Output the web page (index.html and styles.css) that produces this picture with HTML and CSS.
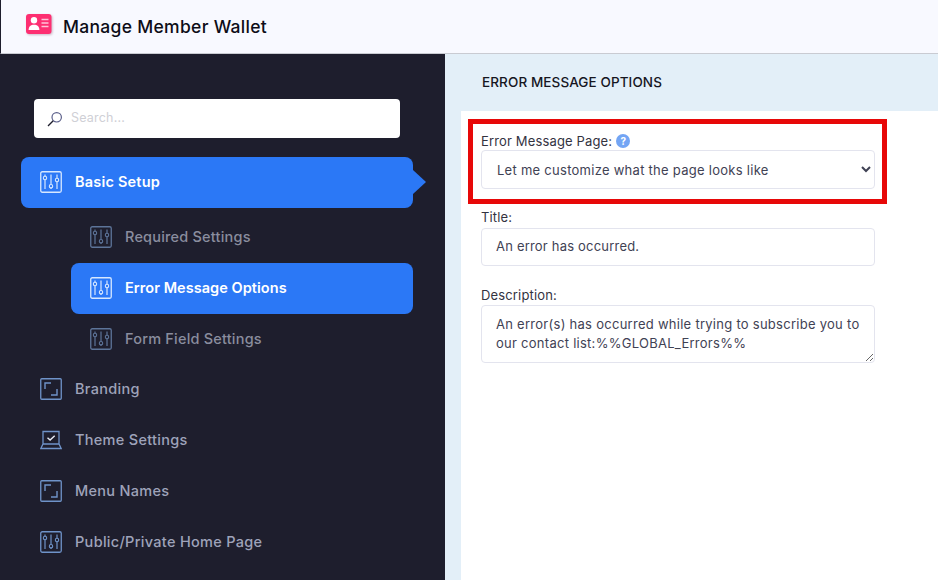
FILE: index.html
```html
<!DOCTYPE html>
<html lang="en">
<head>
<meta charset="utf-8">
<title>Manage Member Wallet</title>
<link rel="stylesheet" href="styles.css">
</head>
<body>
<svg class="defs" width="0" height="0" aria-hidden="true">
  <symbol id="sliders" viewBox="0 0 22 22">
    <rect x="0.75" y="0.75" width="20.5" height="20.5" rx="1.5" fill="none" stroke="currentColor" stroke-width="1.3"/>
    <path d="M5 9v9M11 3.5v10M17 3.5v3.5M17 11v7M5 3.5V5M11 17v1" fill="none" stroke="currentColor" stroke-width="1.2"/>
    <circle cx="5" cy="7" r="1.7" fill="none" stroke="currentColor" stroke-width="1.1"/>
    <circle cx="11" cy="15.2" r="1.7" fill="none" stroke="currentColor" stroke-width="1.1"/>
    <circle cx="17" cy="9" r="1.7" fill="none" stroke="currentColor" stroke-width="1.1"/>
  </symbol>
  <symbol id="frame" viewBox="0 0 22 22">
    <rect x="0.75" y="0.75" width="20.5" height="20.5" rx="1" fill="none" stroke="currentColor" stroke-width="1.3"/>
    <path d="M5 11V5h6M17 11v6h-6" fill="none" stroke="currentColor" stroke-width="1.4"/>
  </symbol>
  <symbol id="laptop" viewBox="0 0 22 22">
    <path d="M3 15V2.500h16V15M0.800 19.500h20.400L19 15H3z" fill="none" stroke="currentColor" stroke-width="1.300"/>
    <path d="M7.500 8.700l2.600 2.400 4.600-4.400" fill="none" stroke="#e8ecf5" stroke-width="1.400"/>
  </symbol>
</svg>

<header class="topbar">
  <svg class="logo" width="28" height="22" viewBox="0 0 28 22" aria-hidden="true">
    <rect x="1" y="1" width="25.500" height="20" rx="3" fill="#fd2f72"/>
    <circle cx="9" cy="7.200" r="3.200" fill="#fff"/>
    <path d="M3.600 17c0-3.700 2.200-5.300 5.400-5.300s5.400 1.600 5.400 5.300z" fill="#fff"/>
    <path d="M16.500 6.500h7M16.500 10h7M16.500 13.500h7" stroke="#ffc4d8" stroke-width="1.300"/>
  </svg>
  <h1 class="app-title">Manage Member Wallet</h1>
</header>

<div class="layout">
  <aside class="sidebar">
    <div class="search">
      <svg width="16" height="16" viewBox="0 0 16 16" aria-hidden="true">
        <circle cx="9.700" cy="6.300" r="4.700" fill="none" stroke="#5b5f8a" stroke-width="1.200"/>
        <path d="M6.200 9.800L1 15" stroke="#1e1e2d" stroke-width="1.300"/>
      </svg>
      <span class="search-text">Search...</span>
    </div>
    <nav class="menu">
      <a class="item item-current"><svg class="ico"><use href="#sliders"/></svg><span>Basic Setup</span></a>
      <div class="submenu">
        <a class="item item-sub"><svg class="ico"><use href="#sliders"/></svg><span>Required Settings</span></a>
        <a class="item item-sub item-active"><svg class="ico"><use href="#sliders"/></svg><span>Error Message Options</span></a>
        <a class="item item-sub"><svg class="ico"><use href="#sliders"/></svg><span>Form Field Settings</span></a>
      </div>
      <a class="item"><svg class="ico"><use href="#frame"/></svg><span>Branding</span></a>
      <a class="item"><svg class="ico"><use href="#laptop"/></svg><span>Theme Settings</span></a>
      <a class="item"><svg class="ico"><use href="#frame"/></svg><span>Menu Names</span></a>
      <a class="item"><svg class="ico"><use href="#sliders"/></svg><span>Public/Private Home Page</span></a>
    </nav>
  </aside>

  <main class="content">
    <h2 class="content-title">ERROR MESSAGE OPTIONS</h2>
    <div class="panel">
      <div class="highlight">
        <label class="label label-help" for="page">Error Message Page: <span class="help">?</span></label>
        <select class="field select" id="page">
          <option>Let me customize what the page looks like</option>
        </select>
      </div>
      <div class="fields">
        <div class="group">
          <label class="label" for="title">Title:</label>
          <input class="field input" id="title" type="text" value="An error has occurred.">
        </div>
        <div class="group">
          <label class="label" for="desc">Description:</label>
          <textarea class="field textarea" id="desc">An error(s) has occurred while trying to subscribe you to our contact list:%%GLOBAL_Errors%%</textarea>
        </div>
      </div>
    </div>
  </main>
</div>
</body>
</html>
```
FILE: styles.css
```css
* { box-sizing: border-box; }
html, body { height: 100%; }
body {
  margin: 0;
  height: 580px;
  overflow: hidden;
  font-family: Inter, "Open Sans", sans-serif;
  background: #1e1e2d;
  display: flex;
  flex-direction: column;
}
.defs { position: absolute; }
.topbar {
  height: 54px;
  flex: none;
  display: flex;
  align-items: center;
  gap: 10px;
  padding: 0 0 1px 24px;
  background: #f8f9ff;
  border-left: 1px solid #1e1e2d;
  border-bottom: 1px solid #c9cbd2;
}
.logo { filter: drop-shadow(1px 1px 1px rgba(120, 60, 90, .35)); margin-top: -4px; }
.app-title {
  margin: 1px 0 0;
  font-size: 17.500px;
  font-weight: 500;
  letter-spacing: .3px;
  color: #0d0d17;
}
.layout { flex: 1; display: flex; min-height: 0; }
.sidebar {
  width: 445px;
  flex: none;
  background: #1e1e2d;
  padding: 45px 0 0 21px;
}
.search {
  width: 366px;
  height: 39px;
  margin-left: 13px;
  display: flex;
  align-items: center;
  gap: 8px;
  padding-left: 13px;
  background: #fff;
  border-radius: 4px;
}
.search-text { font-size: 12.500px; color: #cfd0d6; letter-spacing: .2px; margin-bottom: 2px; }
.menu { margin-top: 19px; width: 392px; }
.item {
  position: relative;
  height: 51px;
  display: flex;
  align-items: center;
  gap: 13px;
  padding-left: 19px;
  border-radius: 8px;
  font-size: 14.500px;
  font-weight: 500;
  letter-spacing: .3px;
  color: #9ea3ba;
}
.item span { margin-bottom: 2px; }
.ico { width: 22px; height: 22px; color: #6f93c9; flex: none; margin-bottom: 1px; }
.item-sub { color: #8a8d9e; letter-spacing: .2px; }
.item-sub .ico { color: #5d7499; }
.item-current {
  background: #2b78f6;
  color: #fff;
  font-weight: 600;
  letter-spacing: .2px;
}
.item-active {
  background: #2b78f6;
  color: #fff;
  font-weight: 600;
  letter-spacing: .05px;
}
.item-current .ico, .item-active .ico { color: #d7e8ff; }
.item-current::after {
  content: "";
  position: absolute;
  left: 100%;
  top: 13px;
  border-left: 13px solid #2b78f6;
  border-top: 12.500px solid transparent;
  border-bottom: 12.500px solid transparent;
}
.submenu { margin: 4px 0 -1px 50px; }
.content {
  flex: 1;
  min-width: 0;
  background: #e3eff8;
  display: flex;
  flex-direction: column;
  padding-top: 1px;
}
.content-title {
  margin: 0;
  height: 56px;
  flex: none;
  display: flex;
  align-items: center;
  padding: 0 0 2px 37px;
  font-size: 13.500px;
  font-weight: 500;
  letter-spacing: .1px;
  color: #16161f;
}
.panel {
  flex: 1;
  margin-left: 16px;
  background: #fff;
  padding: 8px 0 0 7px;
}
.highlight {
  width: 419px;
  height: 85px;
  border: 5px solid #e70808;
  padding: 8px;
}
.label {
  display: block;
  font-size: 13px;
  letter-spacing: .15px;
  line-height: 18px;
  color: #33333f;
}
.label-help { display: flex; align-items: center; gap: 4px; }
.help {
  width: 14px;
  height: 14px;
  border-radius: 50%;
  background: #73a5f4;
  color: #fff;
  font-size: 10px;
  font-weight: 700;
  display: flex;
  align-items: center;
  justify-content: center;
}
.field {
  display: block;
  width: 394px;
  border: 1px solid #e3e4ee;
  border-radius: 4px;
  background: #fff;
  font-family: inherit;
  font-size: 13px;
  letter-spacing: .27px;
  color: #3f4254;
  outline: none;
}
.select { height: 39px; padding: 0 11px; }
.fields { padding: 4px 0 0 13px; }
.group { margin-bottom: 20px; }
.input { height: 38px; padding: 0 14px 2px; margin-top: 2px; letter-spacing: .2px; }
.textarea {
  height: 58px;
  padding: 9px 14px 0;
  line-height: 19px;
  margin-top: 1px;
}
```
